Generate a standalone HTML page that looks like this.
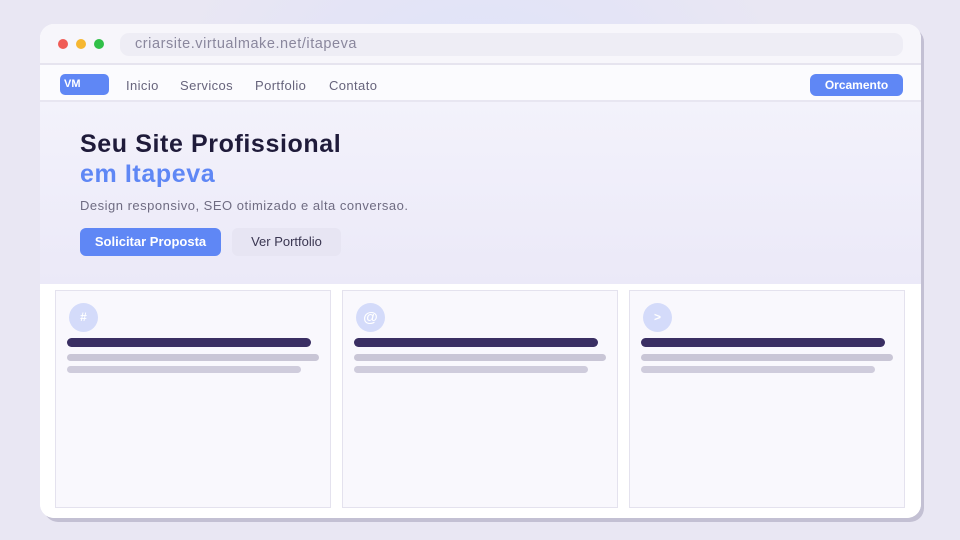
<!DOCTYPE html>
<html><head><meta charset="utf-8"><style>
*{margin:0;padding:0;box-sizing:border-box}
body{width:960px;height:540px;overflow:hidden;background:radial-gradient(ellipse 320px 280px at 480px 140px,#dde2fb 0%,#e4e4f6 60%,#e9e7f3 100%);font-family:"Liberation Sans",sans-serif;position:relative}
.shadow{position:absolute;left:44px;top:28px;width:880px;height:494px;border-radius:14px;background:#c3c0d3}
.win{position:absolute;left:40px;top:24px;width:881px;height:494px;border-radius:14px;background:#fff;overflow:hidden}
.top{height:41px;background:#f7f6fb;border-bottom:2px solid #e6e4ef;position:relative}
.dot{position:absolute;top:15px;width:10px;height:10px;border-radius:50%}
.url{position:absolute;left:80px;top:9px;width:783px;height:23px;border-radius:9px;background:#eeedf5;color:#8a879d;font-size:14.5px;letter-spacing:0.55px;line-height:23px;padding-left:15px}
.nav{height:37px;background:#fbfbfe;border-bottom:2px solid #e8e6f1;position:relative;font-size:13px;letter-spacing:0.4px;color:#67647c}
.nav span{position:absolute;top:13px}
.vm{position:absolute;left:20px;top:9px;width:49px;height:21px;border-radius:5px;background:#5f87f5;color:#fff;font-weight:bold;font-size:11px;line-height:21px;padding-left:4px;letter-spacing:0}
.orc{position:absolute;left:770px;top:9px;width:93px;height:22px;border-radius:6px;background:#5f87f5;color:#fff;font-weight:bold;font-size:12px;line-height:22px;text-align:center;letter-spacing:0}
.hero{height:182px;background:linear-gradient(180deg,#f3f2fb,#ebe9f8);position:relative}
h1{position:absolute;left:40px;top:27px;font-size:25px;line-height:30px;color:#1f1b3a;font-weight:bold;letter-spacing:0.6px}
h1 b{color:#5f87f5;display:block}
.sub{position:absolute;left:40px;top:96px;font-size:13px;color:#6f6c82;letter-spacing:0.5px}
.b1{position:absolute;left:40px;top:126px;width:141px;height:28px;border-radius:6px;background:#5f87f5;color:#fff;font-weight:bold;font-size:13px;line-height:28px;text-align:center}
.b2{position:absolute;left:192px;top:126px;width:109px;height:28px;border-radius:6px;background:#e7e5f3;color:#3a3651;font-size:13px;line-height:28px;text-align:center}
.cards{position:absolute;top:266px;left:0;width:881px;height:228px;background:#fff}
.card{position:absolute;top:0;width:276px;height:218px;border:1px solid #e4e2ee;background:#f9f8fd}
.ic{position:absolute;left:13px;top:12px;width:29px;height:29px;border-radius:50%;background:#d4dbfa;color:#fff;font-size:12px;font-weight:bold;text-align:center;line-height:29px}
.l1{position:absolute;left:11px;top:47px;width:244px;height:9px;border-radius:5px;background:#3a2f63}
.l2{position:absolute;left:11px;top:63px;width:252px;height:7px;border-radius:4px;background:#c9c6d6}
.l3{position:absolute;left:11px;top:75px;width:234px;height:7px;border-radius:4px;background:#cfccdc}
</style></head><body>
<div class="shadow"></div>
<div class="win">
<div class="top">
<div class="dot" style="left:18px;background:#f05b55"></div>
<div class="dot" style="left:36px;background:#f6b731"></div>
<div class="dot" style="left:54px;background:#31c048"></div>
<div class="url">criarsite.virtualmake.net/itapeva</div>
</div>
<div class="nav">
<div class="vm">VM</div>
<span style="left:86px">Inicio</span>
<span style="left:140px">Servicos</span>
<span style="left:215px">Portfolio</span>
<span style="left:289px">Contato</span>
<div class="orc">Orcamento</div>
</div>
<div class="hero">
<h1>Seu Site Profissional<b>em Itapeva</b></h1>
<div class="sub">Design responsivo, SEO otimizado e alta conversao.</div>
<div class="b1">Solicitar Proposta</div>
<div class="b2">Ver Portfolio</div>
</div>
<div class="cards">
<div class="card" style="left:15px"><div class="ic">#</div><div class="l1"></div><div class="l2"></div><div class="l3"></div></div>
<div class="card" style="left:302px"><div class="ic" style="font-size:15px">@</div><div class="l1"></div><div class="l2"></div><div class="l3"></div></div>
<div class="card" style="left:589px"><div class="ic">&gt;</div><div class="l1"></div><div class="l2"></div><div class="l3"></div></div>
</div>
</div>
</body></html>
